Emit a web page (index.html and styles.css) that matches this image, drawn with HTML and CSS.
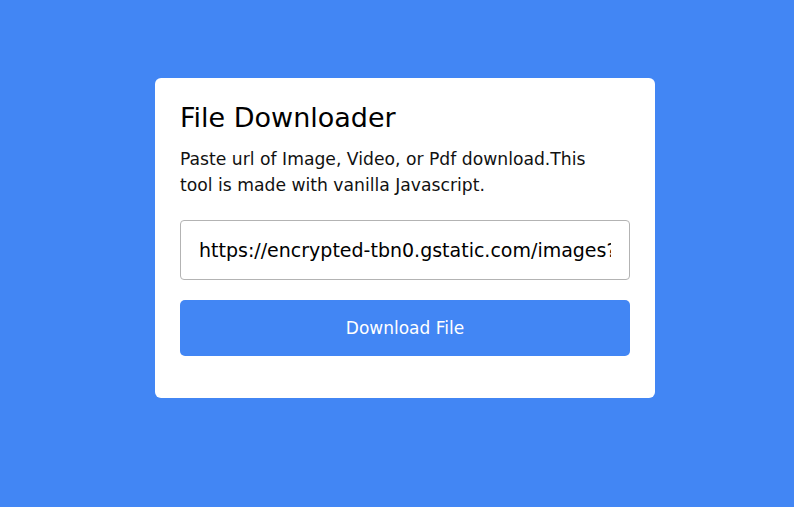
FILE: index.html
```html
<!DOCTYPE html>
<html>
<head>
<meta charset="utf-8">
<link rel="stylesheet" href="styles.css">
</head>
<body>
<div class="page">
  <div class="card">
    <h1 class="title">File Downloader</h1>
    <p class="desc">Paste url of Image, Video, or Pdf download.This tool is made with vanilla Javascript.</p>
    <input class="url" type="text" value="https://encrypted-tbn0.gstatic.com/images?q=tbn:ANd9GcR">
    <button class="btn">Download File</button>
  </div>
</div>
</body>
</html>
```
FILE: styles.css
```css
html, body {
  margin: 0;
  height: 100%;
  background: #4286f4;
}
.page {
  padding: 78px 0 0 155px;
  font-family: "DejaVu Sans", "Open Sans", sans-serif;
}
.card {
  width: 500px;
  height: 320px;
  box-sizing: border-box;
  background: #fff;
  border-radius: 6px;
  padding: 22px 25px 25px;
  display: flex;
  flex-direction: column;
}
.title {
  margin: 0;
  font-size: 27px;
  font-weight: 500;
  line-height: 36px;
  color: #000;
}
.desc {
  margin: 10px 0 0;
  max-width: 430px;
  font-size: 17.2px;
  line-height: 26px;
  color: #111;
}
.url {
  margin-top: 22px;
  height: 60px;
  box-sizing: border-box;
  border: 1px solid #b3b3b3;
  border-radius: 4px;
  padding: 0 18px;
  font-family: inherit;
  font-size: 19px;
  color: #000;
  outline: none;
}
.btn {
  margin-top: 20px;
  height: 56px;
  border: none;
  border-radius: 5px;
  background: #4286f4;
  color: #fff;
  font-family: inherit;
  font-size: 17px;
}
```
